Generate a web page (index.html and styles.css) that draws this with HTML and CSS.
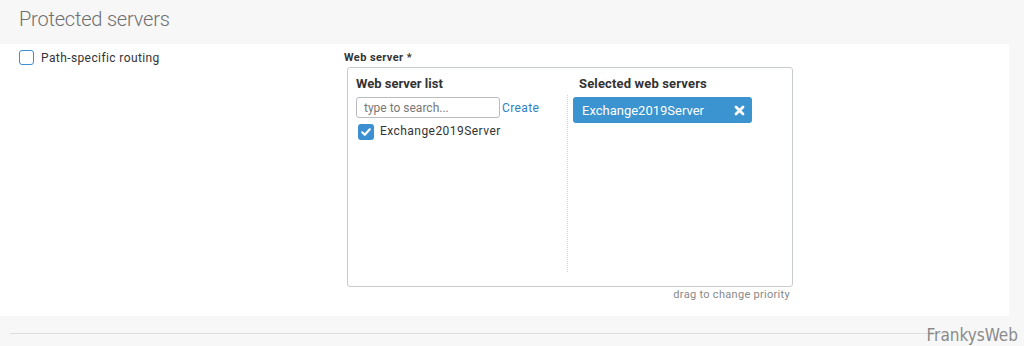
FILE: index.html
```html
<!DOCTYPE html>
<html lang="en">
<head>
  <meta charset="UTF-8" />
  <title>Protected servers</title>
  <link rel="stylesheet" href="styles.css">
</head>
<body>
  <div class="section-head">
    <h2>Protected servers</h2>
  </div>

  <div class="panel">
    <div class="left-col">
      <label class="check-row">
        <span class="checkbox"></span>
        Path-specific routing
      </label>
    </div>

    <div class="right-col">
      <div class="field-label">Web server *</div>
      <div class="picker">
        <div class="picker-list">
          <div class="picker-title">Web server list</div>
          <div class="search-row">
            <input type="text" class="search" placeholder="type to search..." />
            <a href="#" class="create">Create</a>
          </div>
          <div class="item">
            <span class="checkbox checked">
              <svg width="12" height="12" viewBox="0 0 12 12"><path d="M2.2 6.3 L4.8 8.8 L9.8 3.3" fill="none" stroke="#fff" stroke-width="2.2" stroke-linecap="round" stroke-linejoin="round"/></svg>
            </span>
            Exchange2019Server
          </div>
        </div>
        <div class="picker-selected">
          <div class="picker-title">Selected web servers</div>
          <div class="pill">
            <span>Exchange2019Server</span>
            <svg class="pill-x" width="11" height="11" viewBox="0 0 11 11"><path d="M2 2 L9 9 M9 2 L2 9" stroke="#fff" stroke-width="2.8" stroke-linecap="round"/></svg>
          </div>
        </div>
      </div>
      <div class="hint">drag to change priority</div>
    </div>
  </div>

  <div class="footer-line"></div>
  <div class="watermark">FrankysWeb</div>
</body>
</html>
```

FILE: styles.css
```css
body {
  margin: 0;
  background: #f7f7f7;
  font-family: Roboto, "Liberation Sans", sans-serif;
  color: #333;
  position: relative;
  height: 346px;
  overflow: hidden;
}
.section-head {
  height: 44px;
  padding-left: 19px;
}
.section-head h2 {
  margin: 0;
  padding-top: 7px;
  font-size: 20px;
  font-weight: 300;
  color: #6f6f6f;
  letter-spacing: -0.2px;
}
.panel {
  background: white;
  width: 1009px;
  height: 272px;
  display: flex;
}
.left-col {
  width: 325px;
  padding-left: 19px;
  padding-top: 6px;
}
.check-row {
  display: flex;
  align-items: center;
  gap: 7px;
  font-size: 12px;
  letter-spacing: 0.4px;
  color: #333;
}
.checkbox {
  box-sizing: border-box;
  width: 15px;
  height: 15px;
  border: 1.5px solid #3c8fd0;
  border-radius: 3px;
  display: inline-flex;
  align-items: center;
  justify-content: center;
}
.checkbox.checked {
  width: 16px;
  height: 16px;
  background: #3c8fd0;
  border: none;
}
.right-col {
  width: 449px;
  padding-top: 7px;
}
.field-label {
  font-size: 11px;
  font-weight: bold;
  letter-spacing: 0.4px;
  color: #333;
  height: 16px;
}
.picker {
  margin-left: 3px;
  height: 218px;
  border: 1px solid #c8ccd0;
  border-radius: 3px;
  display: flex;
}
.picker-list {
  width: 211px;
  padding: 8px 0 0 8px;
}
.picker-selected {
  flex: 1;
  padding: 8px 0 0 3px;
  position: relative;
}
.picker-title {
  font-size: 13px;
  font-weight: bold;
  color: #333;
  height: 21px;
}
.picker-selected .picker-title {
  padding-left: 9px;
  letter-spacing: 0.15px;
}
.picker-selected::before {
  content: "";
  position: absolute;
  left: 0;
  top: 27px;
  height: 177px;
  border-left: 1px dotted #d4d4d4;
}
.search-row {
  display: flex;
  align-items: center;
  gap: 2px;
}
.search {
  box-sizing: border-box;
  width: 144px;
  height: 21px;
  border: 1px solid #b8bcc0;
  border-radius: 3px;
  padding: 0 7px;
  font-family: inherit;
  font-size: 12px;
  color: #333;
}
.search::placeholder {
  color: #777;
}
.create {
  font-size: 12px;
  letter-spacing: 0.4px;
  color: #2f80c4;
  text-decoration: none;
}
.item {
  display: flex;
  align-items: center;
  gap: 6px;
  font-size: 12px;
  letter-spacing: 0.45px;
  color: #333;
  margin-top: 3px;
  padding-left: 2px;
}
.item .checkbox {
  margin-top: 3px;
}
.pill {
  margin-left: 3px;
  width: 179px;
  height: 26px;
  box-sizing: border-box;
  background: #3b93cf;
  border-radius: 3px;
  color: white;
  font-size: 13px;
  display: flex;
  align-items: center;
  justify-content: space-between;
  padding: 0 7px 0 9px;
}
.hint {
  text-align: right;
  font-size: 11px;
  letter-spacing: 0.3px;
  color: #888;
  width: 446px;
  margin-top: 1px;
}
.footer-line {
  margin: 17px 0 0 10px;
  width: 935px;
  border-top: 1px solid #dedede;
}
.watermark {
  position: absolute;
  right: 6px;
  bottom: 1px;
  font-family: "DejaVu Sans Condensed", "DejaVu Sans", sans-serif;
  font-stretch: condensed;
  font-size: 17px;
  color: #8a8a8a;
}
```
